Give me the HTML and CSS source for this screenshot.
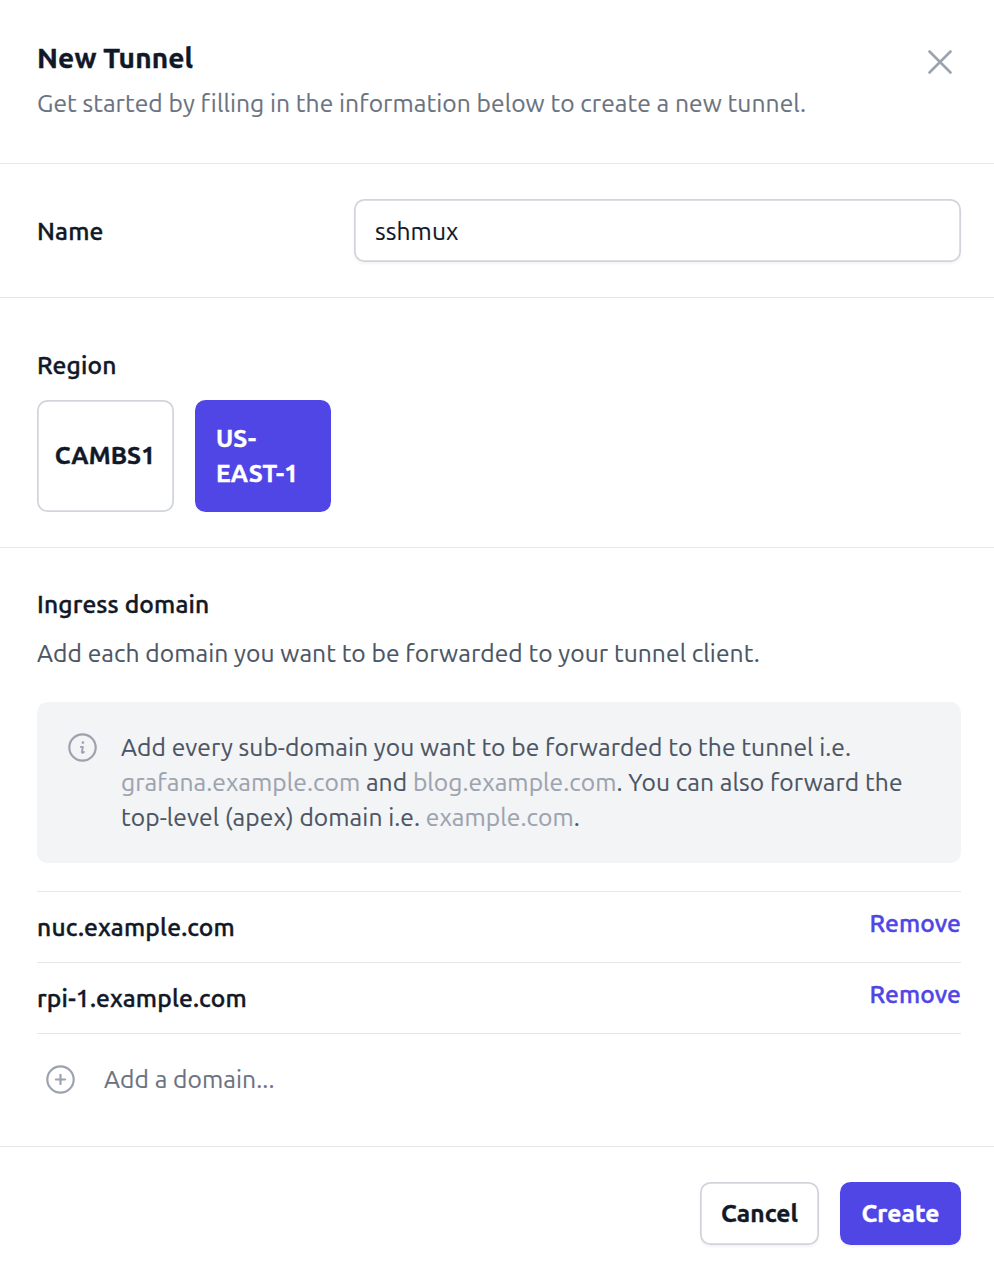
FILE: index.html
```html
<!DOCTYPE html>
<html lang="en">
<head>
<meta charset="utf-8">
<title>New Tunnel</title>
<link rel="stylesheet" href="styles.css">
</head>
<body>
<main class="panel">
  <header class="header">
    <div>
      <h1 class="title"><span>New Tunnel</span></h1>
      <p class="subtitle"><span>Get started by filling in the information below to create a new tunnel.</span></p>
    </div>
    <svg class="close" viewBox="0 0 24 24" fill="none" stroke="currentColor" stroke-width="1.5" stroke-linecap="round" stroke-linejoin="round"><path d="M6 18L18 6M6 6l12 12"/></svg>
  </header>
  <section class="name-row">
    <label class="label name-label"><span>Name</span></label>
    <div class="input"><span>sshmux</span></div>
  </section>
  <section class="region">
    <h2 class="label region-label"><span>Region</span></h2>
    <div class="options">
      <div class="option"><span class="cambs">CAMBS1</span></div>
      <div class="option selected"><span class="useast">US-<br>EAST-1</span></div>
    </div>
  </section>
  <section class="ingress">
    <h2 class="label ingress-label"><span>Ingress domain</span></h2>
    <p class="description"><span>Add each domain you want to be forwarded to your tunnel client.</span></p>
    <div class="info">
      <svg class="info-icon" viewBox="0 0 30 30" fill="none" stroke="currentColor" stroke-width="2.2" stroke-linecap="round" stroke-linejoin="round"><circle cx="15.5" cy="14.5" r="13.2"/><path stroke-width="1.9" d="M13.8 13.9h2.1l-1 5.1c-.1.6.4.9 1 .6l1.1-.6"/><circle cx="15.9" cy="9.6" r="1.3" fill="currentColor" stroke="none"/></svg>
      <p class="info-text">
        <span class="line line1">Add every sub-domain you want to be forwarded to the tunnel i.e.</span>
        <span class="line line2"><em>grafana.example.com</em> and <em>blog.example.com</em>. You can also forward the</span>
        <span class="line line3">top-level (apex) domain i.e. <em>example.com</em>.</span>
      </p>
    </div>
    <ul class="domains">
      <li class="domain"><span class="host">nuc.example.com</span><a class="remove">Remove</a></li>
      <li class="domain"><span class="host">rpi-1.example.com</span><a class="remove">Remove</a></li>
    </ul>
    <div class="add">
      <svg class="add-icon" viewBox="0 0 30 30" fill="none" stroke="currentColor" stroke-width="2.2" stroke-linecap="round"><circle cx="15.5" cy="14.5" r="13.2"/><path d="M10.9 14.5h9.2M15.5 9.9v9.2"/></svg>
      <span class="add-text">Add a domain...</span>
    </div>
  </section>
  <footer class="footer">
    <button class="button cancel"><span>Cancel</span></button>
    <button class="button create"><span>Create</span></button>
  </footer>
</main>
</body>
</html>
```
FILE: styles.css
```css
* { box-sizing: border-box; }
body { margin: 0; background: #fff; color: #111827; font: 400 24.6px/35px Ubuntu, "Noto Sans", sans-serif; letter-spacing: .07px; -webkit-text-stroke: .15px currentColor; }
h1, h2, p, ul { margin: 0; padding: 0; list-style: none; }
.panel { width: 994px; height: 1267px; overflow: hidden; white-space: nowrap; }
.header { display: flex; justify-content: space-between; height: 164px; padding: 40px 33px 0 37px; border-bottom: 1px solid #e5e7eb; }
.title { font-size: 28.1px; font-weight: 700; line-height: 35px; letter-spacing: .12px; -webkit-text-stroke-width: .4px; }
.subtitle { margin-top: 11px; color: #6b7280; }
.close { width: 42px; height: 42px; margin-top: 1px; color: #9ca3af; }
.label { font-size: 24.6px; font-weight: 500; line-height: 35px; letter-spacing: .14px; -webkit-text-stroke-width: .4px; }
.name-row { display: flex; align-items: center; justify-content: space-between; height: 134px; padding: 1px 33px 0 37px; border-bottom: 1px solid #e5e7eb; }
.name-label { margin-top: 1px; }
.input { width: 607px; height: 63px; margin-top: -1px; padding: 15px 21px 13px; border-radius: 10.5px; box-shadow: inset 0 0 0 1.76px #d1d5db, 0 2px 3px rgba(0, 0, 0, .05); }
.region { height: 250px; padding: 50px 37px 0; border-bottom: 1px solid #e5e7eb; }
.options { display: flex; gap: 21px; margin-top: 17px; }
.option { display: flex; align-items: center; justify-content: center; width: 137px; height: 112px; padding: 0 1px 1px 0; border-radius: 10.5px; font-weight: 700; letter-spacing: .12px; -webkit-text-stroke-width: .4px; box-shadow: inset 0 0 0 1.76px #d1d5db; }
.option.selected { width: 136px; padding: 0 0 0 21px; justify-content: flex-start; background: #4f46e5; color: #fff; box-shadow: none; }
.ingress { height: 599px; padding: 39px 33px 0 37px; border-bottom: 1px solid #e5e7eb; }
.description { margin-top: 14px; color: #4b5563; }
.info { display: flex; gap: 23px; height: 161px; margin-top: 31px; padding: 28px 30px; border-radius: 10.5px; background: #f3f4f6; }
.info-icon { width: 30px; height: 30px; margin-top: 3px; color: #9ca3af; flex: none; }
.info-text { color: #4b5563; margin-left: 1px; }
.info-text em { font-style: normal; color: #9ca3af; }
.line { display: block; }
.domains { margin-top: 28px; border-top: 1px solid #e5e7eb; }
.domain { display: flex; justify-content: space-between; height: 71px; padding-top: 18px; border-bottom: 1px solid #e5e7eb; font-weight: 500; -webkit-text-stroke-width: .4px; }
.host { letter-spacing: .2px; }
.remove { margin-top: -4px; color: #4f46e5; }
.add { display: flex; align-items: center; gap: 29px; margin-top: 28px; padding-left: 8px; }
.add-icon { width: 30px; height: 30px; color: #9ca3af; }
.add-text { color: #6b7280; }
.footer { display: flex; justify-content: flex-end; gap: 21px; padding: 35px 33px 0; }
.button { height: 63px; padding: 0; border: 0; border-radius: 10.5px; font: inherit; font-weight: 700; letter-spacing: .05px; -webkit-text-stroke: .4px currentColor; color: inherit; background: #fff; }
.cancel { width: 119px; box-shadow: inset 0 0 0 1.76px #d1d5db, 0 2px 3px rgba(0, 0, 0, .05); }
.create { width: 121px; background: #4f46e5; color: #fff; box-shadow: 0 2px 3px rgba(0, 0, 0, .05); }
```
